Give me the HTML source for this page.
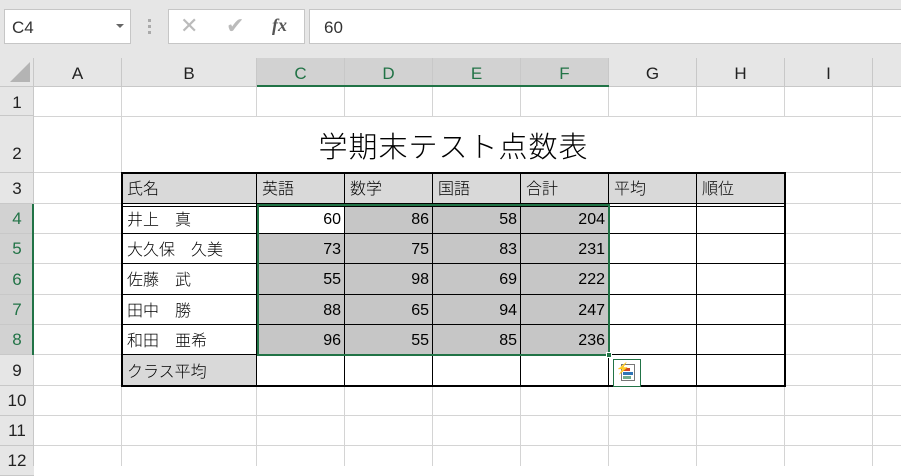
<!DOCTYPE html>
<html><head><meta charset="utf-8"><style>
*{margin:0;padding:0;box-sizing:border-box}
body{width:901px;height:466px;overflow:hidden;background:#fff;position:relative;font-family:"Liberation Sans","Noto Sans CJK JP",sans-serif;color:#000}
div{position:absolute}
.v{width:1px;background:#d4d4d4}
.h{height:1px;background:#d4d4d4}
.ch{top:58px;height:29px;font-size:17px;text-align:center;line-height:31px;color:#222;border-right:1px solid #c8c8c8}
.rh{left:0;width:34px;font-size:17px;text-align:center;color:#222;background:#e6e6e6;border-bottom:1px solid #c8c8c8}
.t{font-size:16px;line-height:29px;padding-left:5px;white-space:nowrap;font-family:"Noto Sans CJK JP",sans-serif;font-weight:300}
.n{font-size:16px;line-height:32px;text-align:right;padding-right:4px}
.bk{background:#000}
</style></head><body>
<div style="left:0;top:0;width:901px;height:58px;background:#e6e6e6"></div>
<div style="left:4px;top:9px;width:127px;height:35px;background:#fff;border:1px solid #c6c6c6;font-size:17px;line-height:35px;padding-left:7px;color:#333">C4</div>
<div style="left:116px;top:24px;width:0;height:0;border-left:4px solid transparent;border-right:4px solid transparent;border-top:4px solid #666"></div>
<div style="left:148px;top:19px;width:3px;height:3px;background:#aaa"></div>
<div style="left:148px;top:25px;width:3px;height:3px;background:#aaa"></div>
<div style="left:148px;top:31px;width:3px;height:3px;background:#aaa"></div>
<div style="left:168px;top:9px;width:137px;height:35px;background:#fff;border:1px solid #c6c6c6"></div>
<div style="left:180px;top:13px;font-size:22px;color:#bbb">✕</div>
<div style="left:226px;top:13px;font-size:22px;color:#bbb">✔</div>
<div style="left:272px;top:15px;font-size:18px;color:#555;font-family:'Liberation Serif',serif;font-style:italic;font-weight:bold">fx</div>
<div style="left:309px;top:9px;width:600px;height:35px;background:#fff;border:1px solid #c6c6c6;font-size:17px;line-height:35px;padding-left:14px;color:#333">60</div>
<div style="left:0;top:58px;width:901px;height:29px;background:#e6e6e6;border-bottom:1px solid #c8c8c8"></div>
<div style="left:0;top:58px;width:34px;height:29px;border-right:1px solid #c8c8c8"></div>
<div style="left:10px;top:62px;width:0;height:0;border-left:20px solid transparent;border-bottom:20px solid #b4b4b4"></div>
<div class="ch" style="left:34px;width:88px">A</div>
<div class="ch" style="left:122px;width:135px">B</div>
<div class="ch" style="left:257px;width:88px;background:#d2d2d2;color:#217346">C</div>
<div class="ch" style="left:345px;width:88px;background:#d2d2d2;color:#217346">D</div>
<div class="ch" style="left:433px;width:88px;background:#d2d2d2;color:#217346">E</div>
<div class="ch" style="left:521px;width:88px;background:#d2d2d2;color:#217346">F</div>
<div class="ch" style="left:609px;width:88px">G</div>
<div class="ch" style="left:697px;width:88px">H</div>
<div class="ch" style="left:785px;width:88px">I</div>
<div style="left:257px;top:85px;width:352px;height:2px;background:#217346"></div>
<div class="rh" style="top:87px;height:29px;line-height:31px">1</div>
<div class="rh" style="top:116px;height:57px;line-height:76px">2</div>
<div class="rh" style="top:173px;height:31px;line-height:31px">3</div>
<div class="rh" style="top:204px;height:30px;line-height:30px;background:#d2d2d2;color:#217346">4</div>
<div class="rh" style="top:234px;height:30px;line-height:30px;background:#d2d2d2;color:#217346">5</div>
<div class="rh" style="top:264px;height:31px;line-height:31px;background:#d2d2d2;color:#217346">6</div>
<div class="rh" style="top:295px;height:30px;line-height:30px;background:#d2d2d2;color:#217346">7</div>
<div class="rh" style="top:325px;height:30px;line-height:30px;background:#d2d2d2;color:#217346">8</div>
<div class="rh" style="top:355px;height:31px;line-height:31px">9</div>
<div class="rh" style="top:386px;height:30px;line-height:30px">10</div>
<div class="rh" style="top:416px;height:30px;line-height:30px">11</div>
<div class="rh" style="top:446px;height:30px;line-height:30px">12</div>
<div style="left:33px;top:87px;width:1px;height:379px;background:#c8c8c8"></div>
<div style="left:32px;top:204px;width:2px;height:151px;background:#217346"></div>
<div class="v" style="left:121px;top:87px;height:379px"></div>
<div class="v" style="left:256px;top:87px;height:379px"></div>
<div class="v" style="left:344px;top:87px;height:379px"></div>
<div class="v" style="left:432px;top:87px;height:379px"></div>
<div class="v" style="left:520px;top:87px;height:379px"></div>
<div class="v" style="left:608px;top:87px;height:379px"></div>
<div class="v" style="left:696px;top:87px;height:379px"></div>
<div class="v" style="left:784px;top:87px;height:379px"></div>
<div class="v" style="left:872px;top:87px;height:379px"></div>
<div class="h" style="left:34px;top:116px;width:867px"></div>
<div class="h" style="left:34px;top:172px;width:867px"></div>
<div class="h" style="left:34px;top:203px;width:867px"></div>
<div class="h" style="left:34px;top:233px;width:867px"></div>
<div class="h" style="left:34px;top:263px;width:867px"></div>
<div class="h" style="left:34px;top:294px;width:867px"></div>
<div class="h" style="left:34px;top:324px;width:867px"></div>
<div class="h" style="left:34px;top:354px;width:867px"></div>
<div class="h" style="left:34px;top:385px;width:867px"></div>
<div class="h" style="left:34px;top:415px;width:867px"></div>
<div class="h" style="left:34px;top:445px;width:867px"></div>
<div style="left:122px;top:117px;width:663px;height:55px;background:#fff;font-size:29px;text-align:center;line-height:56px;font-family:'Noto Sans CJK JP',sans-serif;font-weight:300;letter-spacing:1px">学期末テスト点数表</div>
<div style="left:122px;top:173px;width:663px;height:31px;background:#d9d9d9"></div>
<div style="left:122px;top:204px;width:663px;height:182px;background:#fff"></div>
<div style="left:345px;top:204px;width:264px;height:151px;background:#c6c6c6"></div>
<div style="left:257px;top:234px;width:88px;height:121px;background:#c6c6c6"></div>
<div style="left:122px;top:355px;width:135px;height:31px;background:#d9d9d9"></div>
<div class="bk" style="left:256px;top:173px;width:1px;height:213px"></div>
<div class="bk" style="left:344px;top:173px;width:1px;height:213px"></div>
<div class="bk" style="left:432px;top:173px;width:1px;height:213px"></div>
<div class="bk" style="left:520px;top:173px;width:1px;height:213px"></div>
<div class="bk" style="left:608px;top:173px;width:1px;height:213px"></div>
<div class="bk" style="left:696px;top:173px;width:1px;height:213px"></div>
<div class="bk" style="left:122px;top:203px;width:663px;height:1px"></div>
<div class="bk" style="left:122px;top:206px;width:663px;height:1px"></div>
<div class="bk" style="left:122px;top:233px;width:663px;height:1px"></div>
<div class="bk" style="left:122px;top:263px;width:663px;height:1px"></div>
<div class="bk" style="left:122px;top:294px;width:663px;height:1px"></div>
<div class="bk" style="left:122px;top:324px;width:663px;height:1px"></div>
<div class="bk" style="left:122px;top:354px;width:663px;height:1px"></div>
<div style="left:121px;top:172px;width:665px;height:215px;border:2px solid #000"></div>
<div class="t" style="left:122px;top:173px">氏名</div>
<div class="t" style="left:257px;top:173px">英語</div>
<div class="t" style="left:345px;top:173px">数学</div>
<div class="t" style="left:433px;top:173px">国語</div>
<div class="t" style="left:521px;top:173px">合計</div>
<div class="t" style="left:609px;top:173px">平均</div>
<div class="t" style="left:697px;top:173px">順位</div>
<div class="t" style="left:122px;top:204px">井上　真</div>
<div class="t" style="left:122px;top:234px">大久保　久美</div>
<div class="t" style="left:122px;top:264px">佐藤　武</div>
<div class="t" style="left:122px;top:295px">田中　勝</div>
<div class="t" style="left:122px;top:325px">和田　亜希</div>
<div class="t" style="left:122px;top:356px">クラス平均</div>
<div class="n" style="left:257px;top:204px;width:88px">60</div>
<div class="n" style="left:345px;top:204px;width:88px">86</div>
<div class="n" style="left:433px;top:204px;width:88px">58</div>
<div class="n" style="left:521px;top:204px;width:88px">204</div>
<div class="n" style="left:257px;top:234px;width:88px">73</div>
<div class="n" style="left:345px;top:234px;width:88px">75</div>
<div class="n" style="left:433px;top:234px;width:88px">83</div>
<div class="n" style="left:521px;top:234px;width:88px">231</div>
<div class="n" style="left:257px;top:264px;width:88px">55</div>
<div class="n" style="left:345px;top:264px;width:88px">98</div>
<div class="n" style="left:433px;top:264px;width:88px">69</div>
<div class="n" style="left:521px;top:264px;width:88px">222</div>
<div class="n" style="left:257px;top:295px;width:88px">88</div>
<div class="n" style="left:345px;top:295px;width:88px">65</div>
<div class="n" style="left:433px;top:295px;width:88px">94</div>
<div class="n" style="left:521px;top:295px;width:88px">247</div>
<div class="n" style="left:257px;top:325px;width:88px">96</div>
<div class="n" style="left:345px;top:325px;width:88px">55</div>
<div class="n" style="left:433px;top:325px;width:88px">85</div>
<div class="n" style="left:521px;top:325px;width:88px">236</div>
<div style="left:257px;top:204px;width:353px;height:152px;border:2px solid #217346"></div>
<div style="left:606px;top:352px;width:6px;height:6px;background:#217346;border:1px solid #fff"></div>
<div style="left:613px;top:359px;width:28px;height:28px;background:#fff;border:1px solid #217346"></div>
<div style="left:621px;top:364px;width:14px;height:17px;border:1px solid #777"></div>
<div style="left:623px;top:368px;width:7px;height:3px;background:#d24726"></div>
<div style="left:623px;top:372px;width:10px;height:3px;background:#2e75b6"></div>
<div style="left:623px;top:376px;width:8px;height:3px;background:#70ad8e"></div>
<div style="left:616px;top:362px;font-size:11px;color:#f0b040;font-weight:bold">⚡</div>
</body></html>
